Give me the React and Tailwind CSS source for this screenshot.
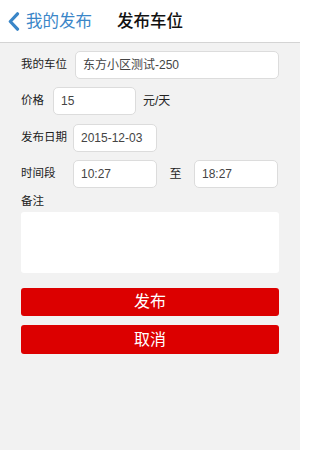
const font = { fontFamily: '"Liberation Sans", "Noto Sans CJK SC", sans-serif' };

const Field = ({ children, className }) => (
  <div
    className={`h-[28px] rounded-[5px] border border-[#dcdcdc] bg-white pl-[7px] flex items-center text-[12px] text-[#444] ${className}`}
  >
    {children}
  </div>
);

export default function App() {
  return (
    <div className="w-[300px] h-[450px] bg-[#f2f2f2] overflow-hidden" style={font}>
      {/* header */}
      <div className="h-[43px] bg-white border-b border-[#d4d4d4] grid grid-cols-[1fr_auto_1fr] items-center">
        <div className="flex items-center pl-[8px] text-[#3a86c8]">
          <svg width="12" height="19" viewBox="0 0 12 19" className="mr-[6px]">
            <path d="M9.5 1.8 L2.3 9.5 L9.5 17.2" fill="none" stroke="#3a86c8" strokeWidth="3.2" strokeLinecap="round" strokeLinejoin="round" />
          </svg>
          <span className="text-[16.5px] leading-none">我的发布</span>
        </div>
        <div className="text-[16.5px] leading-none text-[#111] font-medium">发布车位</div>
        <div />
      </div>

      <div className="px-[21px] pt-[8px]">
        <div className="flex items-center">
          <span className="w-[54px] text-[11.5px] text-[#222]">我的车位</span>
          <Field className="flex-1 h-[27px]">东方小区测试-250</Field>
        </div>

        <div className="flex items-center mt-[8px]">
          <span className="w-[32px] text-[11.5px] text-[#222]">价格</span>
          <Field className="w-[83px]">15</Field>
          <span className="ml-[7px] text-[12px] text-[#222]">元/天</span>
        </div>

        <div className="flex items-center mt-[9px]">
          <span className="w-[52px] text-[11.5px] text-[#222]">发布日期</span>
          <Field className="w-[84px] h-[27px]">2015-12-03</Field>
        </div>

        <div className="flex items-center mt-[8px]">
          <span className="w-[52px] text-[11.5px] text-[#222]">时间段</span>
          <Field className="w-[84px]">10:27</Field>
          <span className="w-[37px] text-center text-[12px] text-[#222]">至</span>
          <Field className="w-[84px]">18:27</Field>
        </div>

        <div className="mt-[5px] text-[11.5px] text-[#222] leading-[16px]">备注</div>
        <div className="mt-[3px] h-[61px] bg-white rounded-[3px]" />

        <button className="mt-[15px] w-full h-[28px] rounded-[3px] bg-[#dc0000] text-white text-[16px] leading-none">
          发布
        </button>
        <button className="mt-[9px] w-full h-[29px] rounded-[3px] bg-[#dc0000] text-white text-[16px] leading-none">
          取消
        </button>
      </div>
    </div>
  );
}
